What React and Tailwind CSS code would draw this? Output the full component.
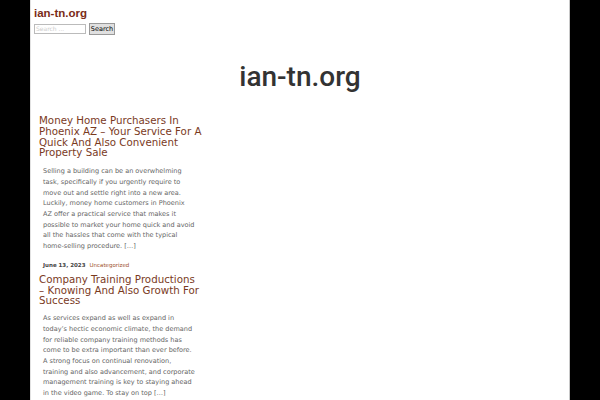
const body1 = [
  "Selling a building can be an overwhelming",
  "task, specifically if you urgently require to",
  "move out and settle right into a new area.",
  "Luckily, money home customers in Phoenix",
  "AZ offer a practical service that makes it",
  "possible to market your home quick and avoid",
  "all the hassles that come with the typical",
  "home-selling procedure. […]",
];
const body2 = [
  "As services expand as well as expand in",
  "today’s hectic economic climate, the demand",
  "for reliable company training methods has",
  "come to be extra important than ever before.",
  "A strong focus on continual renovation,",
  "training and also advancement, and corporate",
  "management training is key to staying ahead",
  "in the video game. To stay on top […]",
];
const title1 = ["Money Home Purchasers In", "Phoenix AZ – Your Service For A", "Quick And Also Convenient", "Property Sale"];
const title2 = ["Company Training Productions", "– Knowing And Also Growth For", "Success"];

function Lines({ lines }) {
  return lines.map((l, i) => (
    <span key={i} className="block whitespace-nowrap">
      {l}
    </span>
  ));
}

export default function App() {
  return (
    <div className="w-[600px] h-[400px] overflow-hidden bg-black flex">
      <div className="ml-[30px] w-[540px] h-full bg-white border-l border-[#e2e2e2] border-r border-r-[#c8c8c8] flex flex-col">
        <div className="pl-[3px] pt-[6px]">
          <div className="text-[11.5px] leading-[14px] font-bold text-[#7a2c17] [font-family:'Liberation_Sans',sans-serif]">
            ian-tn.org
          </div>
          <div className="flex items-center gap-[3px] mt-[3px]">
            <div className="w-[52px] h-[10px] border border-[#bbb] text-[6px] leading-[8px] text-[#ccc] pl-[1px] [font-family:'DejaVu_Sans',sans-serif]">
              Search ...
            </div>
            <div className="h-[12px] w-[26px] text-center bg-[#e0e0e0] border border-[#999] text-[6.5px] leading-[10px] text-black [font-family:'DejaVu_Sans',sans-serif]">
              Search
            </div>
          </div>
        </div>
        <div className="text-center mt-[25px] text-[28px] leading-[34px] font-medium text-[#333] [font-family:Roboto,sans-serif]">
          ian-tn.org
        </div>
        <div className="w-[175px] pl-[8px] mt-[21px] [font-family:'DejaVu_Sans',sans-serif]">
          <h2 className="text-[10.27px] leading-[10.8px] text-[#7a3a1e]">
            <Lines lines={title1} />
          </h2>
          <p className="mt-[8px] pl-[4px] text-[6.53px] leading-[10.7px] text-[#666]">
            <Lines lines={body1} />
          </p>
          <div className="mt-[9px] pl-[4px] text-[5.5px] leading-[8px] flex gap-[4px]">
            <span className="font-semibold text-[#444]">June 13, 2023</span>
            <span className="text-[#a0522d]">Uncategorized</span>
          </div>
          <h2 className="mt-[5px] text-[10.27px] leading-[10.8px] text-[#7a3a1e]">
            <Lines lines={title2} />
          </h2>
          <p className="mt-[7px] pl-[4px] text-[6.53px] leading-[10.7px] text-[#666]">
            <Lines lines={body2} />
          </p>
        </div>
      </div>
    </div>
  );
}
